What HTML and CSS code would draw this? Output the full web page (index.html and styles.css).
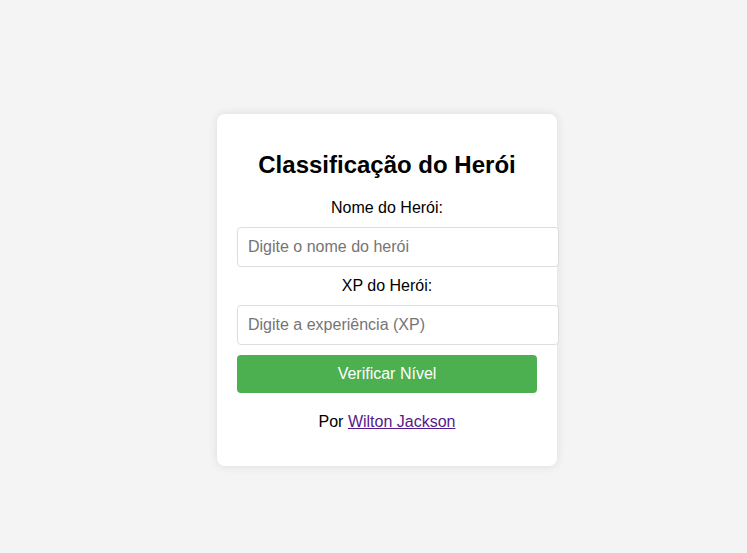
FILE: index.html
```html
<!DOCTYPE html>
<html lang="pt-BR">
<head>
<meta charset="UTF-8">
<title>Classificação do Herói</title>
<link rel="stylesheet" href="styles.css">
</head>
<body>
<div class="card">
  <h2 class="title">Classificação do Herói</h2>
  <label class="label" for="nome">Nome do Herói:</label>
  <input class="field" id="nome" type="text" placeholder="Digite o nome do herói">
  <label class="label" for="xp">XP do Herói:</label>
  <input class="field" id="xp" type="number" placeholder="Digite a experiência (XP)">
  <button class="btn" type="button">Verificar Nível</button>
  <p class="credit">Por <a class="link" href="#">Wilton Jackson</a></p>
</div>
</body>
</html>
```
FILE: styles.css
```css
html, body {
  margin: 0;
  padding: 0;
}
body {
  background: #f4f4f4;
  font-family: "Liberation Sans", Arial, sans-serif;
  display: flex;
  justify-content: center;
  align-items: flex-start;
  min-height: 100vh;
  padding: 114px 0 0 27px;
  box-sizing: border-box;
}
.card {
  background: #fff;
  width: 300px;
  padding: 20px;
  border-radius: 8px;
  box-shadow: 0 0 10px rgba(0, 0, 0, 0.1);
  text-align: center;
}
.title {
  font-size: 24px;
  margin: 17px 0 20px;
}
.label {
  display: block;
  font-size: 16px;
  color: #000;
}
.field {
  display: block;
  width: 100%;
  padding: 10px;
  margin: 10px 0 10px;
  font-size: 16px;
  font-family: "Liberation Sans", Arial, sans-serif;
  border: 1px solid #ddd;
  border-radius: 4px;
  background: #fff;
}
.field::placeholder {
  color: #757575;
}
.field::-webkit-inner-spin-button,
.field::-webkit-outer-spin-button {
  -webkit-appearance: none;
  margin: 0;
}
.btn {
  display: block;
  width: 100%;
  padding: 10px;
  font-size: 16px;
  font-family: "Liberation Sans", Arial, sans-serif;
  color: #fff;
  background: #4caf50;
  border: none;
  border-radius: 4px;
  cursor: pointer;
}
.credit {
  font-size: 16px;
  margin: 20px 0 15px;
}
.link {
  color: #551a8b;
}
```
